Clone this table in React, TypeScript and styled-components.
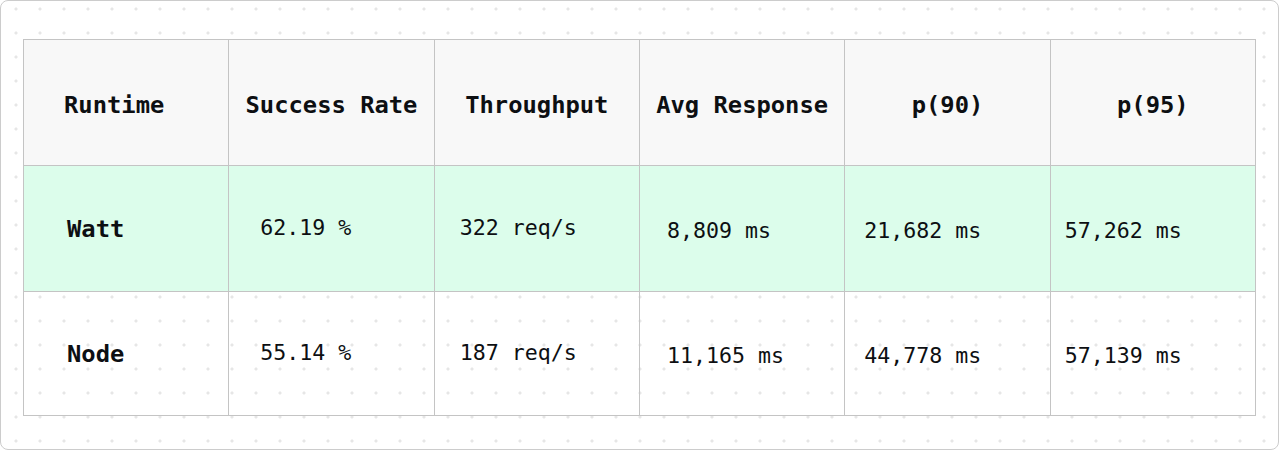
import React from "react";
import styled, { createGlobalStyle } from "styled-components";

const Global = createGlobalStyle`
  html, body { margin: 0; padding: 0; background: #ffffff; }
  body { font-family: "DejaVu Sans Mono", "Liberation Mono", monospace; }
`;

const Card = styled.div`
  box-sizing: border-box;
  width: 1279px;
  height: 450px;
  border: 1px solid #cccccc;
  border-radius: 8px;
  background-color: #ffffff;
  background-image: radial-gradient(circle, #e6e6e6 1.3px, transparent 1.8px);
  background-size: 24px 24px;
  background-position: 3px -4px;
  padding: 38px 0 0 22px;
`;

const Table = styled.table`
  border-collapse: collapse;
  table-layout: fixed;
  width: 1233px;
  color: #0d0f12;
  font-family: "DejaVu Sans Mono", "Liberation Mono", monospace;
`;

const HeadRow = styled.tr`
  height: 126px;
  background: #f8f8f8;
`;

const BodyRow = styled.tr<{ $highlight?: boolean; $h: number }>`
  height: ${(p) => p.$h}px;
  background: ${(p) => (p.$highlight ? "#dcfdeb" : "transparent")};
`;

const HeadCell = styled.th<{ $first?: boolean }>`
  box-sizing: border-box;
  border: 1px solid #c4c4c4;
  font-size: 23.8px;
  font-weight: 700;
  text-align: ${(p) => (p.$first ? "left" : "center")};
  padding: 4px 0 0 ${(p) => (p.$first ? "40px" : "0")};
  white-space: nowrap;
  vertical-align: middle;
`;

const Cell = styled.td<{ $pad: number; $shift: number; $label?: boolean }>`
  box-sizing: border-box;
  border: 1px solid #c4c4c4;
  font-size: ${(p) => (p.$label ? "23.8px" : "21.6px")};
  font-weight: ${(p) => (p.$label ? 700 : 400)};
  text-align: left;
  padding-left: ${(p) => p.$pad}px;
  padding-top: ${(p) => Math.max(p.$shift, 0)}px;
  padding-bottom: ${(p) => Math.max(-p.$shift, 0)}px;
  white-space: nowrap;
  vertical-align: middle;
`;

const headers = ["Runtime", "Success Rate", "Throughput", "Avg Response", "p(90)", "p(95)"];
const pads = [43, 31, 25, 27, 19, 14];
const shifts = [0, -2, -2, 4, 4, 4];

const rows = [
  { name: "Watt", values: ["62.19 %", "322 req/s", "8,809 ms", "21,682 ms", "57,262 ms"], highlight: true, h: 126 },
  { name: "Node", values: ["55.14 %", "187 req/s", "11,165 ms", "44,778 ms", "57,139 ms"], highlight: false, h: 124 },
];

export default function App() {
  return (
    <>
      <Global />
      <Card>
        <Table>
          <thead>
            <HeadRow>
              {headers.map((h, i) => (
                <HeadCell key={h} $first={i === 0}>
                  {h}
                </HeadCell>
              ))}
            </HeadRow>
          </thead>
          <tbody>
            {rows.map((r) => (
              <BodyRow key={r.name} $highlight={r.highlight} $h={r.h}>
                <Cell $pad={pads[0]} $shift={shifts[0]} $label>
                  {r.name}
                </Cell>
                {r.values.map((v, i) => (
                  <Cell key={i} $pad={pads[i + 1]} $shift={shifts[i + 1]}>
                    {v}
                  </Cell>
                ))}
              </BodyRow>
            ))}
          </tbody>
        </Table>
      </Card>
    </>
  );
}
